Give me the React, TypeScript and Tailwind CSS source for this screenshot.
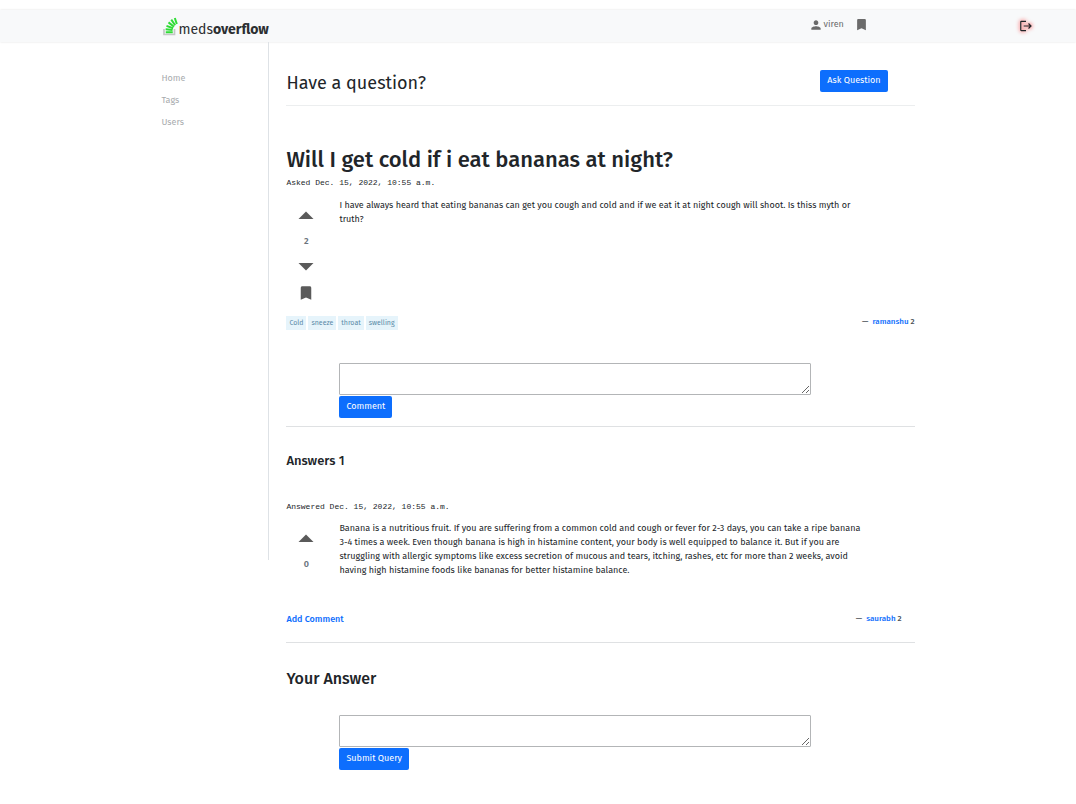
import type { ReactNode } from "react";
import { MdArrowDropDown, MdArrowDropUp, MdBookmark, MdLogout, MdPerson } from "react-icons/md";

const tags = ["Cold", "sneeze", "throat", "swelling"];
const links = ["Home", "Tags", "Users"];

function Logo() {
  return (
    <svg viewBox="0 0 30 36" className="h-[19px] w-[15px]" fill="none">
      <path d="M2 23v11h21V23" stroke="#c4c7c6" strokeWidth="3.4" />
      <g stroke="#2fdc35" strokeWidth="4">
        <path d="M5.5 29.5h14" />
        <path d="M5.3 23.4l13.9 1.8" />
        <path d="M7 16.8l13.2 4.6" />
        <path d="M11 9.8l11 8.6" />
        <path d="M16.5 4.2l7.8 11.4" />
        <path d="M23.6 1l4 12" />
      </g>
    </svg>
  );
}

function Header() {
  return (
    <header className="mt-[10px] h-8 bg-[#f8f9fa] shadow-[0_0_2px_rgba(0,0,0,0.12)]">
      <div className="flex h-full items-center pl-[15%] pr-[43px] text-[#6b6b6b]">
        <a href="#" className="ml-[2px] flex items-end text-[14px] leading-3 text-[#2c2f31]">
          <Logo />
          <span>
            meds<b>overflow</b>
          </span>
        </a>
        <nav className="ml-auto mr-[17%] flex items-center gap-[10px] pr-[2px] pb-[3px]">
          <a href="#" className="flex items-center text-[9px]">
            <MdPerson size={14} />
            viren
          </a>
          <a href="#" aria-label="Bookmarks">
            <MdBookmark size={15} />
          </a>
        </nav>
        <button aria-label="Log out" className="text-[#212529] drop-shadow-[0_0_2px_#ff0000]">
          <MdLogout size={14} />
        </button>
      </div>
    </header>
  );
}

function Sidebar() {
  return (
    <nav className="flex h-[518px] w-[108px] shrink-0 flex-col gap-2 border-r border-[#dee2e6] pt-[29px] text-[9px] leading-[14px] text-[#a8abae]">
      {links.map((link) => (
        <a key={link} href="#">
          {link}
        </a>
      ))}
    </nav>
  );
}

function PrimaryButton({ children }: { children: ReactNode }) {
  return (
    <button className="block h-[22px] rounded-[2px] bg-[#0d6efd] px-[7px] text-[9px] text-white">
      {children}
    </button>
  );
}

function Author({ name }: { name: string }) {
  return (
    <p className="text-[8px] leading-3 font-medium text-[#495057]">
      — &nbsp;
      <a href="#" className="text-[#0d6efd]">
        {name}
      </a>{" "}
      2
    </p>
  );
}

function Votes({ count, full }: { count: number; full?: boolean }) {
  return (
    <div className="flex w-10 shrink-0 flex-col items-center text-[#5a5a5a]">
      <button aria-label="Vote up">
        <MdArrowDropUp size={36} />
      </button>
      <span className="text-[9px] leading-[14px] font-semibold text-[#6a737c]">{count}</span>
      {full && (
        <>
          <button aria-label="Vote down">
            <MdArrowDropDown size={36} />
          </button>
          <button aria-label="Bookmark">
            <MdBookmark size={18} />
          </button>
        </>
      )}
    </div>
  );
}

function ReplyForm({ label, action }: { label: string; action: string }) {
  return (
    <form className="ml-[53px]" onSubmit={(e) => e.preventDefault()}>
      <textarea
        aria-label={label}
        className="mb-px block h-8 w-[82%] rounded-[1px] border border-[#b3b5b7] bg-white"
      />
      <PrimaryButton>{action}</PrimaryButton>
    </form>
  );
}

export default function App() {
  return (
    <div className="bg-white font-['Fira_Sans','Noto_Sans',sans-serif] text-[#212529]">
      <Header />
      <div className="flex px-[15%]">
        <Sidebar />
        <main className="min-w-0 flex-1 pl-[17px]">
          <div className="flex h-16 items-center justify-between border-b border-[#eceeef] pt-5 pr-[27px]">
            <h2 className="text-[18px]">Have a question?</h2>
            <div className="pb-[6px]">
              <PrimaryButton>Ask Question</PrimaryButton>
            </div>
          </div>

          <h1 className="mt-[38px] text-[22px] leading-8 font-medium">
            Will I get cold if i eat bananas at night?
          </h1>
          <p className="mt-px font-['Liberation_Mono',monospace] text-[8px] leading-3">
            Asked Dec. 15, 2022, 10:55 a.m.
          </p>
          <div className="mt-[9px] flex gap-[13px]">
            <Votes count={2} full />
            <p className="mr-[54px] text-[9px] leading-[14px]">
              I have always heard that eating bananas can get you cough and cold and if we eat it at
              night cough will shoot. Is thiss myth or truth?
            </p>
          </div>
          <div className="mt-[14px] flex items-start justify-between">
            <ul className="flex gap-[2px]">
              {tags.map((tag) => (
                <li key={tag} className="bg-[#e6f4fb] px-[3px] text-[7px] leading-[14px] text-[#5b8ba8]">
                  {tag}
                </li>
              ))}
            </ul>
            <Author name="ramanshu" />
          </div>

          <div className="mt-[33px] border-b border-[#dfe1e3] pb-2">
            <ReplyForm label="Comment on the question" action="Comment" />
          </div>

          <h3 className="mt-6 text-[13px] leading-5 font-medium">Answers 1</h3>
          <p className="mt-[30px] font-['Liberation_Mono',monospace] text-[8px] leading-3">
            Answered Dec. 15, 2022, 10:55 a.m.
          </p>
          <div className="mt-2 flex gap-[13px]">
            <Votes count={0} />
            <p className="mr-[54px] text-[9px] leading-[14px]">
              Banana is a nutritious fruit. If you are suffering from a common cold and cough or
              fever for 2-3 days, you can take a ripe banana 3-4 times a week. Even though banana is
              high in histamine content, your body is well equipped to balance it. But if you are
              struggling with allergic symptoms like excess secretion of mucous and tears, itching,
              rashes, etc for more than 2 weeks, avoid having high histamine foods like bananas for
              better histamine balance.
            </p>
          </div>
          <div className="mt-[35px] flex items-center justify-between border-b border-[#dfe1e3] pr-[13px] pb-4">
            <a href="#" className="text-[9px] leading-[14px] font-medium text-[#0d6efd]">
              Add Comment
            </a>
            <Author name="saurabh" />
          </div>

          <h3 className="my-6 text-[16px] leading-6 font-medium">Your Answer</h3>
          <ReplyForm label="Your answer" action="Submit Query" />
        </main>
      </div>
    </div>
  );
}
